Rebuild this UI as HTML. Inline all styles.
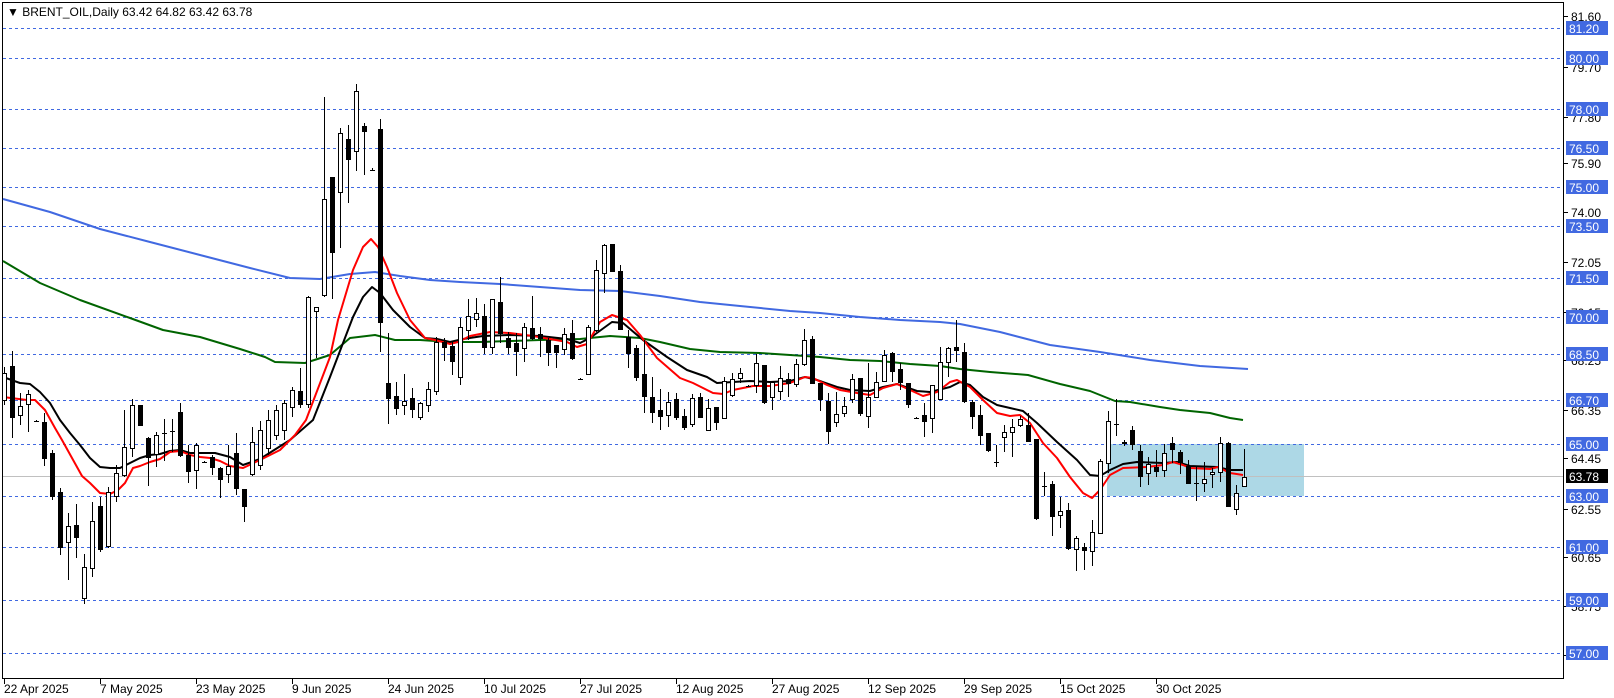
<!DOCTYPE html>
<html><head><meta charset="utf-8"><style>
html,body{margin:0;padding:0;background:#fff;}
svg{display:block;font-family:"Liberation Sans",sans-serif;}
</style></head><body>
<svg id="c" width="1614" height="698" xmlns="http://www.w3.org/2000/svg"></svg>
<script>
const D=[
[367,405,400,373],[351,438,366,417],[393,425,415,406],[390,432,404,394],[420,422,421,421],[413,466,422,458],[450,500,453,496],[488,555,492,547],[513,580,542,526],[504,558,525,537],
[554,604,598,567],[502,577,568,521],[497,552,506,549],[487,548,546,492],[465,502,496,473],[410,477,475,447],[399,457,448,405],[405,425,405,425],[437,486,438,457],[432,467,454,435],
[419,461,433,433],[419,452,431,431],[403,457,412,455],[445,483,455,471],[443,489,470,445],[461,463,462,462],[455,475,457,467],[467,498,468,479],[445,483,474,466],[433,495,453,488],
[489,522,489,506],[427,476,474,442],[421,470,465,430],[410,455,448,420],[405,440,435,410],[400,440,430,403],[387,417,407,390],[368,408,391,404],[296,408,404,297],[307,358,311,307],
[97,297,295,199],[177,299,177,252],[128,248,192,133],[125,203,139,159],[84,171,151,91],[123,175,126,131],[168,171,170,170],[119,352,129,322],[333,424,383,398],[382,415,396,408],
[374,415,405,401],[388,418,398,409],[402,420,417,403],[382,412,405,389],[337,395,391,342],[338,361,342,347],[342,375,346,361],[318,385,377,327],[299,340,330,316],[298,327,319,313],
[304,354,316,347],[299,354,347,299],[277,343,302,333],[332,354,338,347],[333,376,343,351],[323,362,348,327],[296,340,328,338],[327,357,334,338],[338,366,340,352],[345,368,345,352],
[328,355,349,334],[320,360,333,358],[378,380,379,379],[325,374,374,327],[260,332,330,270],[244,293,273,245],[244,271,244,271],[265,330,271,329],[330,368,337,353],[345,381,348,377],
[340,413,374,396],[377,423,397,412],[389,430,410,416],[392,427,415,402],[393,420,399,417],[409,430,416,427],[394,427,424,398],[393,418,397,417],[399,430,430,408],[407,430,407,422],
[377,419,418,381],[373,397,395,379],[368,383,378,373],[385,387,386,386],[354,393,385,363],[365,404,365,402],[381,410,397,382],[366,400,391,378],[373,397,379,383],[359,387,384,364],
[329,366,364,340],[336,384,339,383],[383,411,383,399],[393,444,401,431],[392,427,422,414],[397,417,413,406],[374,403,399,379],[378,416,378,413],[363,428,416,397],[372,397,397,382],
[350,382,381,355],[352,382,353,371],[363,390,369,382],[383,408,383,404],[417,419,418,418],[403,437,415,421],[385,433,418,385],[347,399,399,362],[347,377,362,348],[320,362,347,350],
[343,403,352,401],[400,429,402,416],[405,445,415,435],[433,452,433,450],[445,467,462,462],[425,452,437,432],[419,457,432,427],[416,427,425,419],[413,442,425,441],[439,520,439,518],
[472,496,486,486],[481,536,484,516],[497,528,515,511],[503,550,510,548],[536,571,549,538],[543,570,547,550],[520,566,551,532],[459,533,533,461],[411,473,463,421],[399,436,424,424],
[440,446,443,442],[426,450,430,444],[445,487,451,476],[457,485,473,464],[450,477,467,471],[444,477,470,453],[437,463,443,449],[450,474,452,462],[460,484,466,483],[467,501,483,483],
[462,492,483,479],[468,488,474,472],[437,482,472,443],[442,507,443,506],[485,515,509,493],[449,486,486,477]];
const X=i=>4+8*i;
let s='';
s+='<rect x="2.5" y="2.5" width="1561" height="676" fill="none" stroke="#000" stroke-width="1"/>';
s+='<rect x="1107" y="444" width="197" height="52" fill="#add8e6"/>';
const H=[[81.2,28],[80,58],[78,109],[76.5,148],[75,187],[73.5,226],[71.5,278],[70,317],[68.5,354],[66.7,400],[65,444],[63,496],[61,547],[59,600],[57,653]];
H.forEach(h=>{s+=`<line x1="3" x2="1563" y1="${h[1]+.5}" y2="${h[1]+.5}" stroke="#4169e1" stroke-dasharray="3,3"/>`;});
s+='<line x1="3" x2="1563" y1="476.5" y2="476.5" stroke="#c0c0c0"/>';
const poly=(pts,c,w)=>`<polyline fill="none" stroke="${c}" stroke-width="${w}" stroke-linejoin="round" points="${pts.map(p=>p.join(',')).join(' ')}"/>`;
s+=poly([[3,199],[50,212],[100,229],[150,242],[200,255],[250,268],[290,278],[320,279],[350,274],[375,272],[400,276],[430,280],[460,282],[500,284],[540,287],[580,290],[620,291],[660,296],[700,302],[740,306],[790,311],[820,313],[860,317],[900,320],[940,322],[960,324],[1000,332],[1050,345],[1100,352],[1150,360],[1200,366],[1248,369]],'#4169e1',2);
s+=poly([[3,261],[40,283],[80,300],[130,318],[163,330],[200,337],[240,349],[265,357],[275,362],[305,363],[330,355],[350,338],[375,335],[395,340],[420,340],[450,342],[480,342],[540,340],[580,339],[610,336],[640,338],[660,342],[690,349],[720,352],[760,353],[790,355],[820,357],[850,360],[880,361],[910,364],[940,366],[960,369],[990,372],[1028,375],[1060,384],[1090,391],[1115,401],[1130,402],[1160,407],[1180,410],[1210,413],[1230,418],[1243,420]],'#006400',2);
const blk=[[3,377],[20,383],[30,384],[40,392],[50,403],[60,420],[70,433],[80,445],[90,458],[100,467],[110,468],[120,468],[130,463],[140,458],[150,455],[160,454],[170,451],[180,450],[190,453],[215,453],[230,457],[243,465],[260,459],[290,440],[313,420],[330,377],[353,317],[363,297],[372,287],[380,293],[393,310],[410,327],[425,338],[437,339],[450,342],[463,339],[483,336],[510,335],[540,336],[567,339],[580,343],[590,338],[612,322],[623,323],[643,340],[667,357],[687,370],[707,377],[717,383],[733,382],[750,381],[770,382],[790,381],[805,377],[817,380],[837,387],[850,390],[870,391],[883,387],[897,384],[917,391],[930,392],[950,387],[960,382],[970,385],[983,397],[997,405],[1010,408],[1023,411],[1037,423],[1057,442],[1077,460],[1090,475],[1100,476],[1110,470],[1123,464],[1137,462],[1163,463],[1177,462],[1190,466],[1217,467],[1230,470],[1243,470]];
const red=[[3,397],[27,400],[35,400],[45,410],[55,428],[62,440],[72,458],[82,476],[90,483],[100,493],[110,494],[118,490],[125,483],[133,468],[140,466],[150,462],[160,459],[170,452],[180,451],[190,455],[200,457],[210,458],[220,461],[230,466],[243,468],[260,460],[280,450],[295,435],[306,420],[330,357],[338,320],[353,270],[363,247],[371,239],[378,247],[387,267],[397,293],[410,320],[425,338],[435,340],[450,344],[458,342],[470,336],[490,332],[510,333],[533,336],[567,342],[577,347],[587,344],[600,322],[612,315],[627,320],[640,335],[657,358],[680,378],[693,383],[713,393],[723,394],[733,390],[753,386],[770,386],[790,383],[805,377],[813,378],[827,385],[840,390],[857,393],[870,395],[883,388],[897,384],[910,390],[923,396],[937,392],[950,382],[957,380],[970,387],[983,400],[997,413],[1010,416],[1020,415],[1030,423],[1043,443],[1057,458],[1070,477],[1083,493],[1092,498],[1100,490],[1110,475],[1123,468],[1147,467],[1163,465],[1173,462],[1183,465],[1190,468],[1210,469],[1218,467],[1230,473],[1243,475]];
s+=poly(blk,'#000',2);
s+=poly(red,'#ff0000',2);
D.forEach((d,i)=>{const x=X(i);const [h,l,o,c]=d;const top=Math.min(o,c),bot=Math.max(o,c);
s+=`<line x1="${x+.5}" x2="${x+.5}" y1="${h}" y2="${l}" stroke="#000"/>`;
if(bot-top<1){s+=`<line x1="${x-2}" x2="${x+3}" y1="${top+.5}" y2="${top+.5}" stroke="#000"/>`;}
else if(c<o){s+=`<rect x="${x-1.5}" y="${top+.5}" width="4" height="${bot-top}" fill="#fff" stroke="#000"/>`;}
else{s+=`<rect x="${x-2}" y="${top}" width="5" height="${bot-top+1}" fill="#000"/>`;}});
const T=[["81.60",16],["79.70",67],["77.80",117],["75.90",163],["74.00",212],["72.05",262],["70.15",312],["68.25",360],["66.35",410],["64.45",458],["62.55",509],["60.65",557],["58.75",606],["56.85",655]];
T.forEach(t=>{s+=`<line x1="1564" x2="1568" y1="${t[1]+.5}" y2="${t[1]+.5}" stroke="#000"/><text x="1571" y="${t[1]+5}" font-size="12" fill="#000">${t[0]}</text>`;});
H.forEach(h=>{s+=`<rect x="1566" y="${h[1]-7}" width="42" height="14" fill="#4169e1"/><text x="1569" y="${h[1]+5}" font-size="12" fill="#fff">${h[0].toFixed(2)}</text>`;});
s+=`<rect x="1566" y="469" width="42" height="14" fill="#000"/><text x="1569" y="481" font-size="12" fill="#fff">63.78</text>`;
const L=["22 Apr 2025","7 May 2025","23 May 2025","9 Jun 2025","24 Jun 2025","10 Jul 2025","27 Jul 2025","12 Aug 2025","27 Aug 2025","12 Sep 2025","29 Sep 2025","15 Oct 2025","30 Oct 2025"];
L.forEach((t,k)=>{const x=X(k*12);s+=`<line x1="${x+.5}" x2="${x+.5}" y1="679" y2="684" stroke="#000"/><text x="${x}" y="693" font-size="12" fill="#000">${t}</text>`;});
s+=`<text x="7" y="16" font-size="12" fill="#000">▼ BRENT_OIL,Daily  63.42 64.82 63.42 63.78</text>`;
document.getElementById('c').innerHTML=s;
</script>
</body></html>
